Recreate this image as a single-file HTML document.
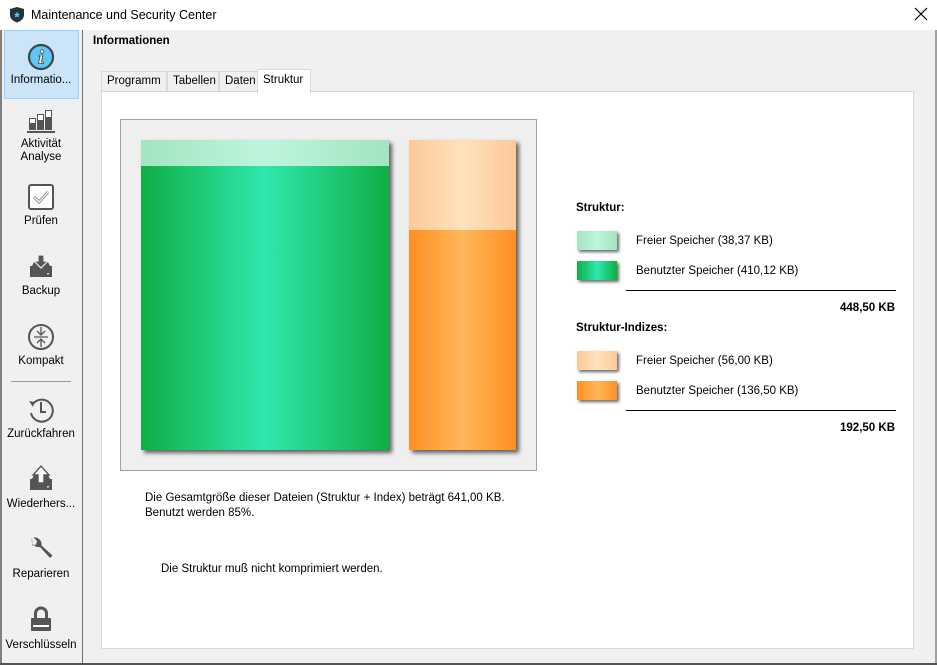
<!DOCTYPE html>
<html><head><meta charset="utf-8"><style>
*{margin:0;padding:0;box-sizing:border-box}
body{width:937px;height:665px;overflow:hidden;background:#f0f0f0;font-family:"Liberation Sans",sans-serif;font-size:11.5px;color:#000;position:relative}
.a{position:absolute}
.t{position:absolute;white-space:nowrap;line-height:14px}
.lbl{position:absolute;left:0;width:82px;text-align:center;font-size:11.5px;line-height:13px;color:#000}
.tab{position:absolute;top:71px;height:20px;border:1px solid #d9d9d9;border-bottom:none;background:#f0f0f0;padding:3px 0 0 5px;font-size:11.5px}
.sw{position:absolute;left:577px;width:40px;height:19px;box-shadow:2px 2px 3px rgba(0,0,0,.6)}
.g1{background:linear-gradient(90deg,#a3e4c1,#bdf5dc 50%,#a3e4c1)}
.g2{background:linear-gradient(90deg,#0fae44,#2fe8ae 50%,#0fae44)}
.o1{background:linear-gradient(90deg,#fdc899,#fee2bc 50%,#fdc899)}
.o2{background:linear-gradient(90deg,#fd8f22,#feb75a 50%,#fd8f22)}
</style></head><body>
<div class="a" style="left:0;top:0;width:937px;height:30px;background:#fff"></div>
<svg class="a" style="left:9px;top:6px" width="16" height="17" viewBox="0 0 16 17"><path d="M8 1 L15 3 V9 C15 13 11 15.5 8 16.5 C5 15.5 1 13 1 9 V3 Z" fill="#2b2f36"/><path d="M8 5.5l1 2.2 2.3.2-1.8 1.5.6 2.3L8 10.5 5.9 11.7l.6-2.3L4.7 7.9 7 7.7z" fill="#4fc3f7"/></svg>
<div class="t" style="left:31px;top:8px;font-size:12.5px">Maintenance und Security Center</div>
<svg class="a" style="left:914px;top:7px" width="14" height="14"><path d="M1 1L13 13M13 1L1 13" stroke="#000" stroke-width="1.2"/></svg>
<div class="a" style="left:0;top:30px;width:2px;height:635px;background:#808080"></div>
<div class="a" style="left:935px;top:30px;width:2px;height:635px;background:#a0a0a0"></div>
<div class="a" style="left:0;top:663px;width:937px;height:2px;background:#555"></div>
<div class="a" style="left:82px;top:30px;width:1px;height:633px;background:#707070"></div>
<!-- sidebar -->
<div class="a" style="left:4px;top:30px;width:75px;height:69px;background:#cce4f7;border:1px solid #99d1ff"></div>
<svg class="a" style="left:27px;top:43px" width="28" height="28"><circle cx="14" cy="14" r="12" fill="#5bc8f5" stroke="#444" stroke-width="2.2"/><circle cx="15" cy="8.5" r="1.8" fill="#fff" stroke="#444" stroke-width=".8"/><path d="M12 12h4l-1.5 7h2v1.5h-5l1.5-7h-1z" fill="#fff" stroke="#444" stroke-width=".8"/></svg>
<div class="lbl" style="top:74px">Informatio...</div>
<svg class="a" style="left:26px;top:108px" width="30" height="26"><rect x="3" y="10" width="7" height="12" fill="#555"/><rect x="4" y="11" width="5" height="4" fill="#fff"/><rect x="11" y="6" width="7" height="16" fill="#555"/><rect x="12" y="7" width="5" height="5" fill="#fff"/><rect x="19" y="2" width="7" height="20" fill="#555"/><rect x="20" y="3" width="5" height="6" fill="#fff"/><rect x="1" y="23" width="28" height="2" fill="#555"/></svg>
<div class="lbl" style="top:138px">Aktivität<br>Analyse</div>
<svg class="a" style="left:27px;top:183px" width="28" height="28"><rect x="2" y="2" width="24" height="24" rx="2" fill="#fff" stroke="#555" stroke-width="2"/><path d="M7 14l5 5 9-10" fill="none" stroke="#888" stroke-width="3"/><path d="M7 14l5 5 9-10" fill="none" stroke="#fff" stroke-width="1.2"/></svg>
<div class="lbl" style="top:215px">Prüfen</div>
<svg class="a" style="left:28px;top:253px" width="26" height="26"><path d="M2 13h22v11H2z" fill="#555"/><path d="M4 13L6 9h14l2 4z" fill="#555"/><path d="M10 2h6v6h4l-7 7-7-7h4z" fill="#555" stroke="#f0f0f0" stroke-width="1.2"/><rect x="19" y="20" width="2" height="1.5" fill="#ddd"/></svg>
<div class="lbl" style="top:285px">Backup</div>
<svg class="a" style="left:27px;top:323px" width="28" height="28"><circle cx="14" cy="14" r="12" fill="none" stroke="#555" stroke-width="2"/><path d="M14 4v8M10 8l4 4 4-4M14 24v-8M10 20l4-4 4 4M7 14h14" fill="none" stroke="#555" stroke-width="1.3"/></svg>
<div class="lbl" style="top:355px">Kompakt</div>
<div class="a" style="left:11px;top:381px;width:60px;height:1px;background:#999"></div>
<svg class="a" style="left:27px;top:396px" width="28" height="28"><path d="M6 8A11 11 0 1 1 4 17" fill="none" stroke="#555" stroke-width="2"/><path d="M2 5l5 1-1 5z" fill="#555"/><path d="M14 6v10h5" fill="none" stroke="#555" stroke-width="2"/></svg>
<div class="lbl" style="top:428px">Zurückfahren</div>
<svg class="a" style="left:28px;top:464px" width="26" height="28"><path d="M2 15h22v11H2z" fill="#555"/><path d="M4 15L6 11h14l2 4z" fill="#555"/><path d="M10 19v-8H5l8-9 8 9h-5v8z" fill="#fff" stroke="#555" stroke-width="1.4"/><rect x="19" y="22" width="2" height="1.5" fill="#ddd"/></svg>
<div class="lbl" style="top:498px">Wiederhers...</div>
<svg class="a" style="left:28px;top:535px" width="26" height="28"><path d="M4 3a7 7 0 0 0 8 9l10 11 2.5-2.5-11-10a7 7 0 0 0-8-8l3.5 3.5-1 3.5-3.5 1z" fill="#555"/></svg>
<div class="lbl" style="top:568px">Reparieren</div>
<svg class="a" style="left:28px;top:605px" width="26" height="28"><path d="M7.5 13V8.5a5.5 5.5 0 0 1 11 0V13" fill="none" stroke="#555" stroke-width="3"/><rect x="3" y="13" width="20" height="13" rx="1" fill="#555"/><rect x="5" y="20" width="16" height="2" fill="#fff"/></svg>
<div class="lbl" style="top:639px">Verschlüsseln</div>
<!-- main -->
<div class="t" style="left:93px;top:34px;font-weight:bold">Informationen</div>
<div class="a" style="left:101px;top:91px;width:813px;height:558px;background:#fff;border:1px solid #d9d9d9"></div>
<div class="tab" style="left:101px;width:66px">Programm</div>
<div class="tab" style="left:167px;width:52px">Tabellen</div>
<div class="tab" style="left:219px;width:39px">Daten</div>
<div class="tab" style="left:257px;top:69px;height:24px;width:54px;background:#fff;padding-top:4px">Struktur</div>
<div class="a" style="left:120px;top:119px;width:417px;height:352px;background:#efefef;border:1px solid #a0a0a0"></div>
<div class="a g2" style="left:141px;top:140px;width:248px;height:310px;box-shadow:3px 3px 4px rgba(0,0,0,.6)"></div>
<div class="a g1" style="left:141px;top:140px;width:248px;height:26px"></div>
<div class="a o2" style="left:409px;top:140px;width:107px;height:310px;box-shadow:3px 3px 4px rgba(0,0,0,.6)"></div>
<div class="a o1" style="left:409px;top:140px;width:107px;height:90px"></div>
<div class="t" style="left:576px;top:201px;font-weight:bold">Struktur:</div>
<div class="sw g1" style="top:231px"></div>
<div class="t" style="left:636px;top:234px">Freier Speicher (38,37 KB)</div>
<div class="sw g2" style="top:261px"></div>
<div class="t" style="left:636px;top:264px">Benutzter Speicher (410,12 KB)</div>
<div class="a" style="left:626px;top:290px;width:270px;height:1px;background:#000"></div>
<div class="t" style="left:796px;width:99px;text-align:right;top:301px;font-weight:bold">448,50 KB</div>
<div class="t" style="left:576px;top:321px;font-weight:bold">Struktur-Indizes:</div>
<div class="sw o1" style="top:351px"></div>
<div class="t" style="left:636px;top:354px">Freier Speicher (56,00 KB)</div>
<div class="sw o2" style="top:381px"></div>
<div class="t" style="left:636px;top:384px">Benutzter Speicher (136,50 KB)</div>
<div class="a" style="left:626px;top:410px;width:270px;height:1px;background:#000"></div>
<div class="t" style="left:796px;width:99px;text-align:right;top:421px;font-weight:bold">192,50 KB</div>
<div class="t" style="left:145px;top:491px;line-height:15px">Die Gesamtgröße dieser Dateien (Struktur + Index) beträgt 641,00 KB.<br>Benutzt werden 85%.</div>
<div class="t" style="left:161px;top:562px">Die Struktur muß nicht komprimiert werden.</div>
</body></html>
